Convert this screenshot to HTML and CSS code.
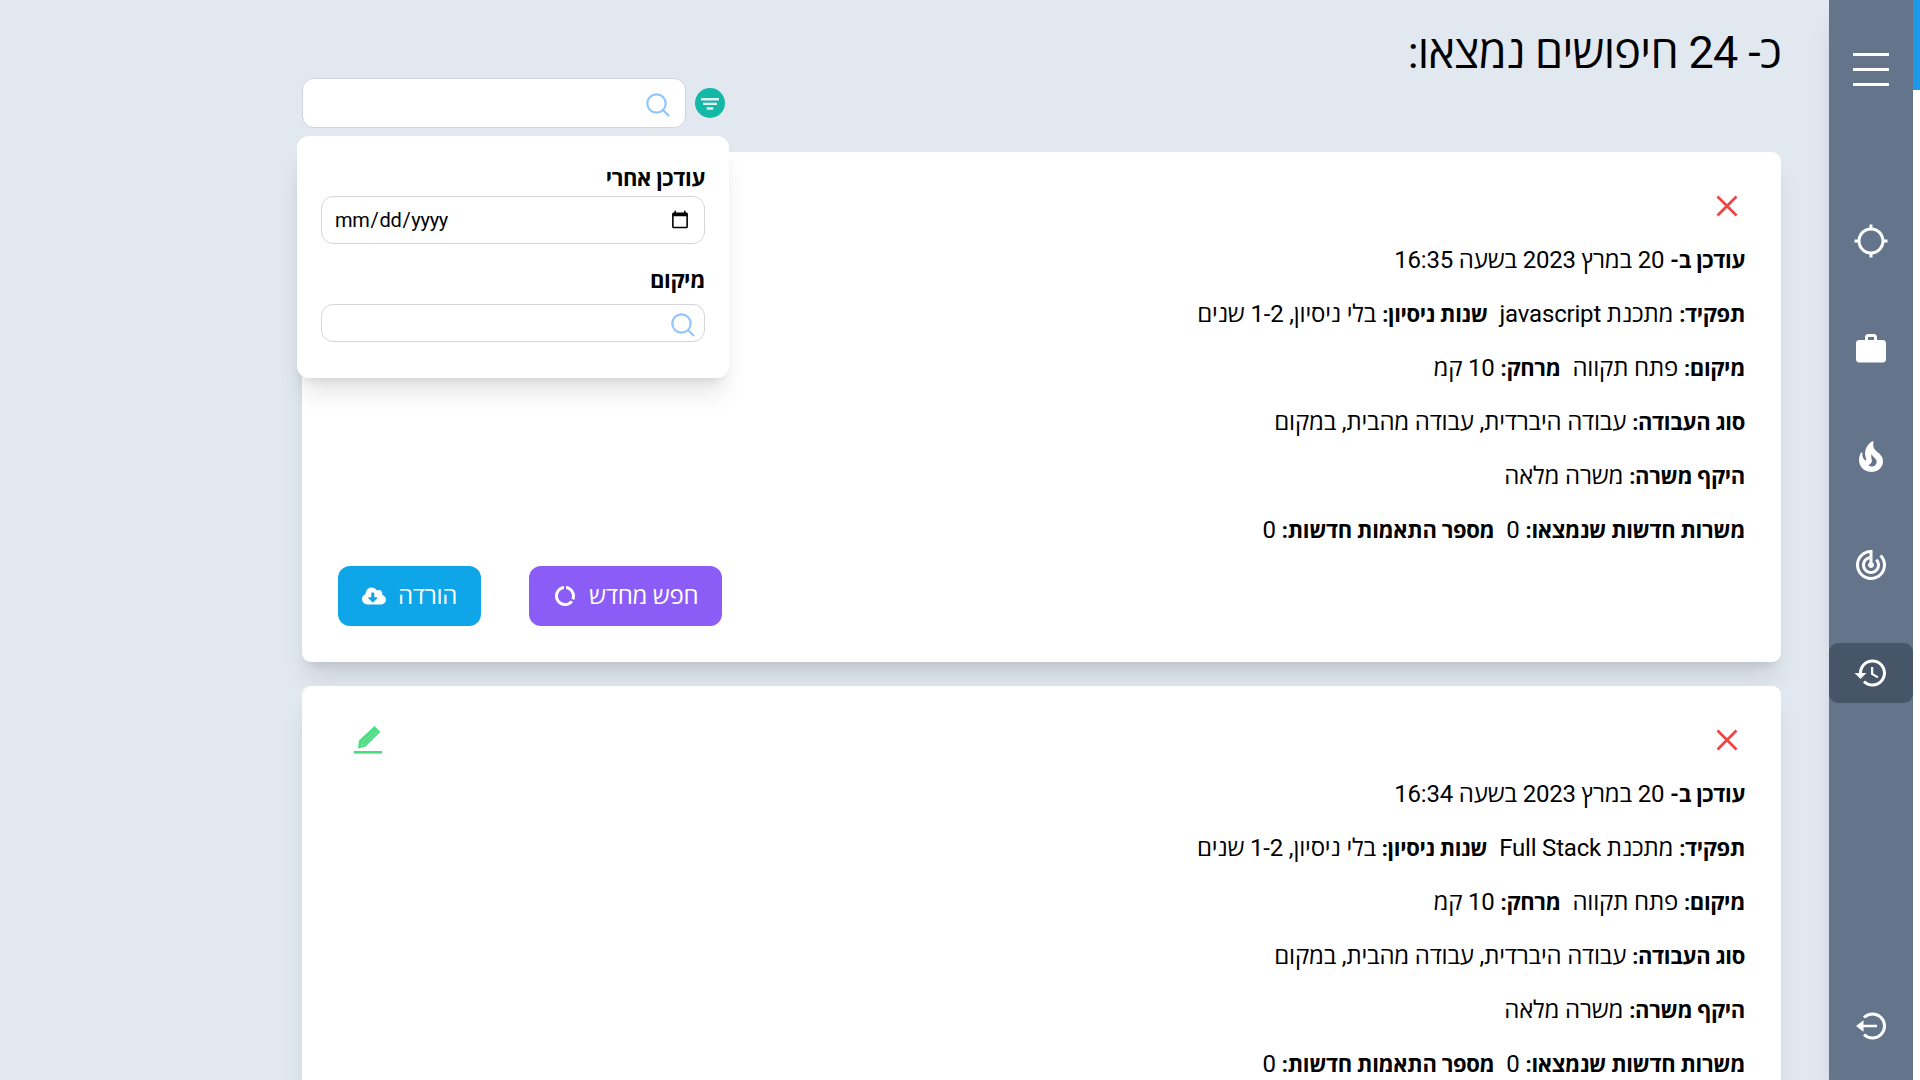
FILE: index.html
```html
<!DOCTYPE html>
<html lang="he" dir="rtl">
<head>
<meta charset="utf-8">
<title>חיפושים</title>
<link rel="stylesheet" href="styles.css">
</head>
<body>
<div class="app">
  <div class="scrollbar"><div class="scrollbar-thumb"></div></div>
  <nav class="sidebar">
    <button class="menu" aria-label="תפריט"><span></span><span></span><span></span></button>
    <ul class="nav">
      <li class="nav-item"><svg viewBox="0 0 24 24"><path d="M20.94 11c-.46-4.17-3.77-7.48-7.94-7.94V1h-2v2.06C6.83 3.52 3.52 6.83 3.06 11H1v2h2.06c.46 4.17 3.77 7.48 7.94 7.94V23h2v-2.06c4.17-.46 7.48-3.77 7.94-7.94H23v-2h-2.06zM12 19c-3.87 0-7-3.13-7-7s3.13-7 7-7 7 3.13 7 7-3.13 7-7 7z"/></svg></li>
      <li class="nav-item"><svg viewBox="0 0 24 24"><path d="M20 6h-4V4c0-1.1-.9-2-2-2h-4c-1.1 0-2 .9-2 2v2H4c-1.1 0-2 .9-2 2v11c0 1.1.9 2 2 2h16c1.1 0 2-.9 2-2V8c0-1.1-.9-2-2-2zm-6 0h-4V4h4v2z"/></svg></li>
      <li class="nav-item"><svg viewBox="0 0 24 24"><path d="M19.48 12.35c-1.57-4.08-7.16-4.3-5.81-10.23.1-.44-.37-.78-.75-.55C9.29 3.71 6.68 8 8.87 13.62c.18.46-.36.89-.75.59-1.81-1.37-2-3.34-1.84-4.75.06-.52-.62-.77-.91-.34C4.69 10.16 4 11.84 4 14.37c.38 5.6 5.11 7.32 6.81 7.54 2.43.31 5.06-.14 6.95-1.87 2.08-1.93 2.84-5.01 1.72-7.69zm-9.28 5.03c1.44-.35 2.18-1.39 2.38-2.31.33-1.43-.96-2.83-.09-5.09.33 1.87 3.27 3.04 3.27 5.08.08 2.53-2.66 4.7-5.56 2.32z"/></svg></li>
      <li class="nav-item"><svg viewBox="0 0 24 24"><path d="M19.07 4.93l-1.41 1.41C19.1 7.79 20 9.79 20 12c0 4.42-3.58 8-8 8s-8-3.58-8-8c0-4.08 3.05-7.44 7-7.93v2.02C8.16 6.57 6 9.03 6 12c0 3.31 2.69 6 6 6s6-2.69 6-6c0-1.66-.67-3.16-1.76-4.24l-1.41 1.41C15.55 9.9 16 10.9 16 12c0 2.21-1.79 4-4 4s-4-1.79-4-4c0-1.86 1.28-3.41 3-3.86v2.14c-.6.35-1 .98-1 1.72 0 1.1.9 2 2 2s2-.9 2-2c0-.74-.4-1.38-1-1.72V2h-1C6.48 2 2 6.48 2 12s4.48 10 10 10 10-4.48 10-10c0-2.76-1.12-5.26-2.93-7.07z"/></svg></li>
      <li class="nav-item active"><svg viewBox="0 0 24 24"><path d="M13 3c-4.97 0-9 4.03-9 9H1l3.89 3.89.07.14L9 12H6c0-3.87 3.13-7 7-7s7 3.13 7 7-3.13 7-7 7c-1.93 0-3.68-.79-4.94-2.06l-1.42 1.42C8.27 19.99 10.51 21 13 21c4.97 0 9-4.03 9-9s-4.03-9-9-9zm-1 5v5l4.28 2.54.72-1.21-3.5-2.08V8H12z"/></svg></li>
    </ul>
    <div class="nav-item logout"><svg viewBox="0 0 24 24"><path d="M7.35 6.35A8 8 0 1 1 7.35 17.65" fill="none" stroke="#fff" stroke-width="2"/><path d="M2 12l5-3.8v3h9v1.6H7v3z"/></svg></div>
  </nav>
  <main class="main">
    <header class="header">
      <h1 class="title">כ- 24 חיפושים נמצאו:</h1>
      <div class="search">
        <button class="filter" aria-label="סינון"><svg viewBox="0 0 30 30"><circle cx="15" cy="15" r="15" fill="#14b8a6"/><path d="M6 11.2h18M8 15.9h14M11.7 20.5h6.6" stroke="#e2f0f0" stroke-width="2.4"/></svg></button>
        <div class="field field-main"><svg class="glass" viewBox="0 0 24 24"><circle cx="10.5" cy="10.5" r="9.2"/><path d="M17 17l6 6"/></svg></div>
        <div class="popup">
          <label class="label" for="after">עודכן אחרי</label>
          <input class="field field-date" id="after" type="date" lang="en" dir="ltr">
          <label class="label label-place">מיקום</label>
          <div class="field field-place"><svg class="glass" viewBox="0 0 24 24"><circle cx="10.5" cy="10.5" r="9.2"/><path d="M17 17l6 6"/></svg></div>
        </div>
      </div>
    </header>
    <section class="card">
      <div class="card-top"><svg class="close" viewBox="0 0 22 22"><path d="M1.5 1.5l19 19M20.5 1.5l-19 19"/></svg></div>
      <p class="row"><b>עודכן ב-</b> <span>20 במרץ 2023 בשעה 16:35</span></p>
      <p class="row"><b>תפקיד:</b> <span>מתכנת javascript</span>&nbsp; <b>שנות ניסיון:</b> <span>בלי ניסיון, 1-2 שנים</span></p>
      <p class="row"><b>מיקום:</b> <span>פתח תקווה</span>&nbsp; <b>מרחק:</b> <span>10 קמ</span></p>
      <p class="row"><b>סוג העבודה:</b> <span>עבודה היברדית, עבודה מהבית, במקום</span></p>
      <p class="row"><b>היקף משרה:</b> <span>משרה מלאה</span></p>
      <p class="row"><b>משרות חדשות שנמצאו:</b> <span>0</span>&nbsp; <b>מספר התאמות חדשות:</b> <span>0</span></p>
      <div class="actions">
        <button class="btn btn-again"><span>חפש מחדש</span><svg viewBox="0 0 24 24"><path d="M13 2.05v3.03c3.39.49 6 3.39 6 6.92 0 .9-.18 1.75-.48 2.54l2.6 1.53c.56-1.24.88-2.62.88-4.07 0-5.18-3.95-9.45-9-9.95zM12 19c-3.87 0-7-3.13-7-7 0-3.53 2.61-6.43 6-6.92V2.05c-5.06.5-9 4.76-9 9.95 0 5.52 4.47 10 9.99 10 3.31 0 6.24-1.61 8.06-4.09l-2.6-1.53C16.17 17.98 14.21 19 12 19z"/></svg></button>
        <button class="btn btn-download"><span>הורדה</span><svg viewBox="0 0 640 512"><path d="M537.6 226.6c4.1-10.7 6.4-22.4 6.4-34.6 0-53-43-96-96-96-19.7 0-38.1 6-53.3 16.2C367 64.2 315.3 32 256 32c-88.4 0-160 71.6-160 160 0 2.7.1 5.4.2 8.1C40.2 219.8 0 273.2 0 336c0 79.5 64.5 144 144 144h368c70.7 0 128-57.3 128-128 0-61.9-44-113.6-102.4-125.4zm-132.9 88.7L299.3 420.7c-6.2 6.2-16.4 6.2-22.6 0L171.3 315.3c-10.1-10.1-2.9-27.3 11.3-27.3H248V176c0-8.8 7.2-16 16-16h48c8.8 0 16 7.2 16 16v112h65.4c14.2 0 21.4 17.2 11.3 27.3z"/></svg></button>
      </div>
    </section>
    <section class="card">
      <div class="card-top"><svg class="close" viewBox="0 0 22 22"><path d="M1.5 1.5l19 19M20.5 1.5l-19 19"/></svg><svg class="edit" viewBox="0 0 28 28"><path d="M20.5 0L26.3 6 11.5 20.5 4 22.5 5 14.5z"/><path d="M0 26.3h28" stroke="#4ade80" stroke-width="2.6"/><path d="M20.5 4.5L8.5 16.5 7.5 19.5 10.5 18.5 22.5 6.5" fill="none" stroke="#8aeeb0" stroke-width=".7"/></svg></div>
      <p class="row"><b>עודכן ב-</b> <span>20 במרץ 2023 בשעה 16:34</span></p>
      <p class="row"><b>תפקיד:</b> <span>מתכנת Full Stack</span>&nbsp; <b>שנות ניסיון:</b> <span>בלי ניסיון, 1-2 שנים</span></p>
      <p class="row"><b>מיקום:</b> <span>פתח תקווה</span>&nbsp; <b>מרחק:</b> <span>10 קמ</span></p>
      <p class="row"><b>סוג העבודה:</b> <span>עבודה היברדית, עבודה מהבית, במקום</span></p>
      <p class="row"><b>היקף משרה:</b> <span>משרה מלאה</span></p>
      <p class="row"><b>משרות חדשות שנמצאו:</b> <span>0</span>&nbsp; <b>מספר התאמות חדשות:</b> <span>0</span></p>
    </section>
  </main>
</div>
</body>
</html>
```
FILE: styles.css
```css
* { box-sizing: border-box; }

html, body { height: 100%; overflow: hidden; }

body {
  margin: 0;
  background: #e2e8f0;
  color: #000;
  font-family: Roboto, "Open Sans", "Liberation Sans", sans-serif;
  font-size: 24px;
  line-height: 36px;
}

button { border: 0; padding: 0; font: inherit; color: inherit; background: none; }
svg { display: block; }

.app { display: flex; height: 1080px; overflow: hidden; }

.scrollbar { width: 7px; background: #fff; z-index: 3; }
.scrollbar-thumb { height: 90px; background: #1b98e8; }

.sidebar {
  display: flex;
  flex-direction: column;
  width: 84px;
  background: #64748b;
  box-shadow: 0 20px 25px -5px rgb(0 0 0 / .1), 0 8px 10px -6px rgb(0 0 0 / .1);
  z-index: 2;
}
.menu {
  display: flex;
  flex-direction: column;
  gap: 12px;
  width: 36px;
  margin: 53px auto 125px;
}
.menu span { height: 3px; background: #fff; }
.nav {
  display: flex;
  flex-direction: column;
  gap: 48px;
  list-style: none;
  margin: 0;
  padding: 0;
}
.nav-item {
  display: flex;
  align-items: center;
  justify-content: center;
  height: 60px;
  border-radius: 9px;
}
.nav-item svg { width: 36px; height: 36px; fill: #fff; }
.nav-item.active { background: #475569; }
.logout { margin-top: auto; margin-bottom: 24px; }

.main { flex: 1; padding: 0 48px 0 302px; }
.header {
  display: flex;
  justify-content: space-between;
  height: 152px;
}
.title {
  margin: 29px 0 0;
  font-size: 45px;
  font-weight: 400;
  line-height: 48px;
  letter-spacing: -.7px;
}

.search {
  position: relative;
  display: flex;
  align-items: center;
  align-self: flex-end;
  gap: 9px;
  margin-bottom: 24px;
}
.filter { width: 30px; height: 30px; }
.field {
  border: 1px solid #d1d5db;
  border-radius: 12px;
  background: #fff;
}
.field-main { width: 384px; height: 50px; padding: 14px 15px 0; }
.glass {
  width: 24px;
  height: 24px;
  fill: none;
  stroke: #93c5fd;
  stroke-width: 2.2;
}
.popup {
  position: absolute;
  top: 58px;
  left: -5px;
  z-index: 1;
  display: flex;
  flex-direction: column;
  width: 432px;
  height: 242px;
  padding: 25px 24px 24px;
  border-radius: 12px;
  background: #fff;
  box-shadow: 0 20px 25px -5px rgb(0 0 0 / .1), 0 8px 10px -6px rgb(0 0 0 / .1);
}
.label { height: 35px; font-size: 22px; font-weight: 700; letter-spacing: -.33px; }
.field-date {
  width: 100%;
  height: 48px;
  padding: 0 12px;
  font: 20px Roboto, sans-serif;
  letter-spacing: -.3px;
  color: #000;
}
.label-place { margin-top: 19px; margin-bottom: 6px; }
.field-place { height: 38px; padding: 8px 9px 0; }

.card {
  height: 510px;
  margin-bottom: 24px;
  padding: 36px;
  border-radius: 9px;
  background: #fff;
  box-shadow: 0 20px 25px -5px rgb(0 0 0 / .1), 0 8px 10px -6px rgb(0 0 0 / .1);
}
.card-top {
  display: flex;
  justify-content: space-between;
  align-items: center;
  height: 36px;
  margin-bottom: 18px;
  padding: 0 7px 0 16px;
}
.close { width: 22px; height: 22px; fill: none; stroke: #ef4444; stroke-width: 2.8; }
.edit { width: 28px; height: 28px; fill: #4ade80; }
.row { height: 36px; margin: 0 0 18px; white-space: nowrap; }
.row b { font-size: 22px; font-weight: 700; line-height: 24px; letter-spacing: -.33px; }
.row span { letter-spacing: -.18px; }

.actions { display: flex; justify-content: flex-end; gap: 48px; }
.btn {
  display: flex;
  align-items: center;
  gap: 12px;
  height: 60px;
  padding: 0 24px;
  border-radius: 12px;
  color: #fff;
}
.btn span { letter-spacing: -.25px; }
.btn svg { width: 24px; height: 24px; fill: #fff; }
.btn-again { background: #8b5cf6; }
.btn-download { background: #0ea5e9; }
```
